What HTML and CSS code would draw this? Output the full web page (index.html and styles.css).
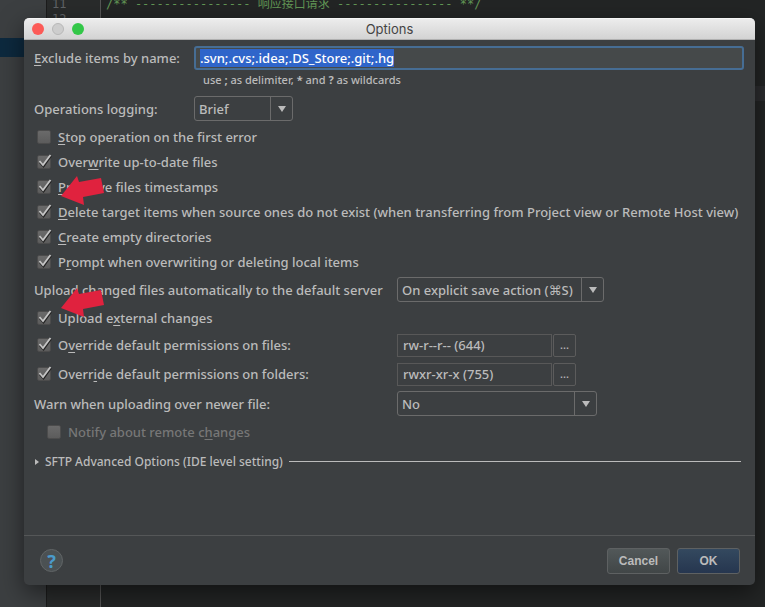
FILE: index.html
```html
<!DOCTYPE html>
<html lang="en">
<head>
  <meta charset="UTF-8">
  <title>Options</title>
  <link rel="stylesheet" href="styles.css">
</head>
<body>

  <svg class="sprite" aria-hidden="true">
    <symbol id="check" viewBox="0 0 16 16">
      <path d="M3 8.5 L6.5 12.5 L14 2" fill="none" stroke="#232323" stroke-width="2"/>
      <path d="M2.5 7 L6 11 L13.5 1" fill="none" stroke="#c4c4c4" stroke-width="1.8"/>
    </symbol>
    <symbol id="down" viewBox="0 0 8 6">
      <path d="M0 0 H8 L4 6 Z" fill="#bbb"/>
    </symbol>
    <symbol id="arrow" viewBox="0 0 43 29">
      <path d="M0 20 L16 0 L18 6 L40 2 L43 17 L22 21 L23 29 Z" fill="#e0223e"/>
    </symbol>
  </svg>

  <!-- editor behind the dialog -->
  <div class="editor">
    <div class="tree"><div class="tree-selected"></div></div>
    <div class="gutter"><div>11</div><div>12</div></div>
    <div class="code">
      <code>/** ---------------- 响应接口请求 ---------------- **/</code>
      <div class="current-line"></div>
    </div>
  </div>

  <form class="dialog">
    <div class="titlebar">
      <div class="lights">
        <span class="light red"></span>
        <span class="light gray"></span>
        <span class="light green"></span>
      </div>
      <h1>Options</h1>
    </div>

    <div class="content">
      <div class="row narrow">
        <label for="exclude"><u>E</u>xclude items by name:</label>
        <input class="exclude" id="exclude" type="text" value=".svn;.cvs;.idea;.DS_Store;.git;.hg">
      </div>
      <div class="row narrow hint-row">
        <p class="hint">use <b>;</b> as delimiter, <b>*</b> and <b>?</b> as wildcards</p>
      </div>
      <div class="row narrow logging">
        <label for="logging">Operations logging:</label>
        <span class="combo small">
          <select id="logging"><option>Brief</option></select>
          <span class="combo-arrow"><svg><use href="#down"/></svg></span>
        </span>
      </div>

      <div class="checks">
        <label class="check"><span class="box"><input type="checkbox"><svg><use href="#check"/></svg></span><span><u>S</u>top operation on the first error</span></label>
        <label class="check"><span class="box"><input type="checkbox" checked><svg><use href="#check"/></svg></span><span>Over<u>w</u>rite up-to-date files</span></label>
        <label class="check"><span class="box"><input type="checkbox" checked><svg><use href="#check"/></svg></span><span><u>P</u>reserve files timestamps</span>
          <svg class="arrow below"><use href="#arrow"/></svg></label>
        <label class="check"><span class="box"><input type="checkbox" checked><svg><use href="#check"/></svg></span><span><u>D</u>elete target items when source ones do not exist (when transferring from Project view or Remote Host view)</span></label>
        <label class="check"><span class="box"><input type="checkbox" checked><svg><use href="#check"/></svg></span><span><u>C</u>reate empty directories</span></label>
        <label class="check"><span class="box"><input type="checkbox" checked><svg><use href="#check"/></svg></span><span>P<u>r</u>ompt when overwriting or deleting local items</span></label>
      </div>

      <div class="row">
        <label for="upload">Upload changed files automatically to the default server</label>
        <span class="combo large">
          <select id="upload"><option>On explicit save action (⌘S)</option></select>
          <span class="combo-arrow"><svg><use href="#down"/></svg></span>
        </span>
      </div>
      <label class="check external"><span class="box"><input type="checkbox" checked><svg><use href="#check"/></svg></span><span>Upload e<u>x</u>ternal changes</span>
        <svg class="arrow above"><use href="#arrow"/></svg></label>

      <div class="row permission">
        <label class="check"><span class="box"><input type="checkbox" checked><svg><use href="#check"/></svg></span><span>O<u>v</u>erride default permissions on files:</span></label>
        <span class="field">
          <input type="text" value="rw-r--r-- (644)" aria-label="File permissions">
          <button type="button">...</button>
        </span>
      </div>
      <div class="row permission">
        <label class="check"><span class="box"><input type="checkbox" checked><svg><use href="#check"/></svg></span><span>Overr<u>i</u>de default permissions on folders:</span></label>
        <span class="field">
          <input type="text" value="rwxr-xr-x (755)" aria-label="Folder permissions">
          <button type="button">...</button>
        </span>
      </div>

      <div class="row">
        <label for="warn">Warn when uploading over newer file:</label>
        <span class="combo medium">
          <select id="warn"><option>No</option></select>
          <span class="combo-arrow"><svg><use href="#down"/></svg></span>
        </span>
      </div>
      <label class="check disabled"><span class="box"><input type="checkbox" disabled><svg><use href="#check"/></svg></span><span>Notify about remote c<u>h</u>anges</span></label>

      <button class="advanced" type="button">
        <svg width="4" height="6" viewBox="0 0 4 6"><path d="M0 0 L4 3 L0 6 Z" fill="#bbb"/></svg>
        <span>SFTP Advanced Options (IDE level setting)</span>
        <span class="rule"></span>
      </button>
    </div>

    <div class="footer">
      <button class="help" type="button" aria-label="Help">?</button>
      <button class="btn" type="button">Cancel</button>
      <button class="btn primary" type="submit">OK</button>
    </div>
  </form>

  <script>
    // the first field opens focused with its value selected
    const exclude = document.getElementById('exclude');
    exclude.focus();
    exclude.select();
  </script>

</body>
</html>
```
FILE: styles.css
```css
* {
  box-sizing: border-box;
}
body {
  margin: 0;
  background: #232525;
  color: #bbb;
  font-family: "Noto Sans", "DejaVu Sans", sans-serif;
  font-size: 13px;
  font-weight: 500;
  line-height: 20px;
}
input, select, button {
  font: inherit;
  color: inherit;
  margin: 0;
}
u {
  text-underline-offset: 2px;
}
.sprite {
  display: none;
}

/* editor */
.editor {
  display: grid;
  grid-template-columns: 46px 55px 1fr;
  height: 100vh;
  overflow: hidden;
}
.tree {
  background: #3c3f41;
  padding-top: 38px;
}
.tree-selected {
  height: 19px;
  background: #0d293e;
}
.gutter {
  display: flex;
  flex-direction: column;
  gap: 7px;
  background: #292b2b;
  border-left: 1px solid #1c1c1c;
  border-right: 1px solid #555;
  padding-left: 5px;
  color: #606366;
  font: 12px/8px "DejaVu Sans Mono", monospace;
}
.code code {
  display: block;
  height: 86px;
  padding-left: 5px;
  white-space: pre;
  color: #629755;
  font: 12px/8px "DejaVu Sans Mono", "Noto Sans CJK SC", monospace;
}
.current-line {
  height: 15px;
  background: #2c2d2f;
}

/* dialog */
.dialog {
  position: absolute;
  inset: 18px 10px 22px 24px;
  display: flex;
  flex-direction: column;
  background: #3c3f41;
  border-radius: 5px;
  box-shadow: 0 8px 24px rgba(0, 0, 0, 0.5);
}
.titlebar {
  display: grid;
  grid-template-columns: 1fr auto 1fr;
  align-items: center;
  height: 22px;
  padding: 0 8px;
  background: linear-gradient(#ececec, #d3d3d3);
  border-top: 1px solid #f6f6f6;
  border-bottom: 1px solid #b0b0b0;
  border-radius: 5px 5px 0 0;
}
.titlebar h1 {
  margin: 0;
  color: #444;
  font: 13px/20px "Inter", sans-serif;
}
.lights {
  display: flex;
  gap: 8px;
}
.light {
  width: 12px;
  height: 12px;
  border-radius: 50%;
}
.red {
  background: #fc5b57;
}
.gray {
  background: #cdcdcd;
  border: 1px solid #b8b8b8;
}
.green {
  background: #33c748;
}

.content {
  flex: 1;
  padding: 6px 9px 0 10px;
  white-space: nowrap;
}
.row {
  display: grid;
  grid-template-columns: 363px 1fr;
  align-items: center;
  margin-bottom: 3px;
}
.narrow {
  grid-template-columns: 160px 1fr;
  margin: 0 2px 0 0;
}
.exclude {
  width: 100%;
  height: 24px;
  padding: 0 4px;
  background: #45494a;
  border: 2px solid #466d94;
  border-radius: 3px;
  outline: none;
}
.exclude::selection {
  background: #2f65ca;
  color: #fff;
}
.hint {
  grid-column: 2;
  margin: 0;
  padding-left: 9px;
  font-size: 11px;
}
.logging {
  margin: 6px 0 3px;
}

/* combo boxes */
.combo {
  display: grid;
  height: 25px;
}
.combo select {
  grid-area: 1 / 1;
  appearance: none;
  padding: 0 4px;
  background: none;
  border: 1px solid #6b6b6b;
  border-radius: 3px;
}
.combo-arrow {
  grid-area: 1 / 1;
  justify-self: end;
  display: grid;
  place-items: center;
  width: 23px;
  border-left: 1px solid #6b6b6b;
  pointer-events: none;
}
.combo-arrow svg {
  width: 8px;
  height: 6px;
}
.small {
  width: 99px;
}
.medium {
  width: 200px;
}
.large {
  width: 207px;
}

/* check boxes */
.checks {
  margin-bottom: 3px;
}
.check {
  position: relative;
  display: flex;
  align-items: center;
  gap: 5px;
  height: 25px;
  padding-left: 3px;
}
.box {
  display: grid;
  width: 16px;
  height: 16px;
}
.box input {
  grid-area: 1 / 1;
  appearance: none;
  width: 14px;
  height: 14px;
  margin-top: 1px;
  background: linear-gradient(#6a6a6a, #5c5c5c);
  border: 1px solid #4c4c4c;
  border-radius: 2px;
}
.box svg {
  grid-area: 1 / 1;
  width: 16px;
  height: 16px;
  visibility: hidden;
  pointer-events: none;
}
.box input:checked + svg {
  visibility: visible;
}
.external {
  margin-bottom: 3px;
}
.disabled {
  padding-left: 13px;
  color: #777;
}

/* red pointers laid over the labels */
.arrow {
  position: absolute;
  left: 27px;
  z-index: 1;
  width: 43px;
  height: 29px;
}
.below {
  top: 2px;
}
.above {
  top: -17px;
}

.permission {
  margin-bottom: 5px;
}
.permission .check {
  height: 24px;
}
.field {
  display: flex;
  gap: 1px;
}
.field input {
  width: 155px;
  height: 23px;
  padding: 0 5px;
  background: none;
  border: 1px solid #585858;
}
.field button {
  width: 23px;
  height: 23px;
  padding: 0;
  background: none;
  border: 1px solid #5c5c5c;
  border-radius: 2px;
  font-size: 11px;
  line-height: 16px;
}

.advanced {
  display: flex;
  align-items: center;
  gap: 6px;
  width: 100%;
  height: 25px;
  margin-top: 5px;
  padding: 0 5px 0 1px;
  background: none;
  border: 0;
  font-size: 12px;
}
.rule {
  flex: 1;
  height: 1px;
  background: #bbb;
}

.footer {
  display: flex;
  align-items: center;
  gap: 7px;
  height: 50px;
  padding: 0 15px 0 16px;
  border-top: 1px solid #555758;
}
.help {
  width: 23px;
  height: 23px;
  margin-right: auto;
  padding: 0;
  background: #4b5153;
  border: 1px solid #616566;
  border-radius: 50%;
  color: #4a9bcb;
  font: bold 18px/20px "Noto Sans", sans-serif;
}
.btn {
  width: 63px;
  height: 26px;
  padding: 0;
  background: linear-gradient(#525859, #414647);
  border: 1px solid #5e6162;
  border-radius: 3px;
  font: bold 12px/20px "Liberation Sans", sans-serif;
}
.primary {
  background: linear-gradient(#34495f, #26364f);
}
```
